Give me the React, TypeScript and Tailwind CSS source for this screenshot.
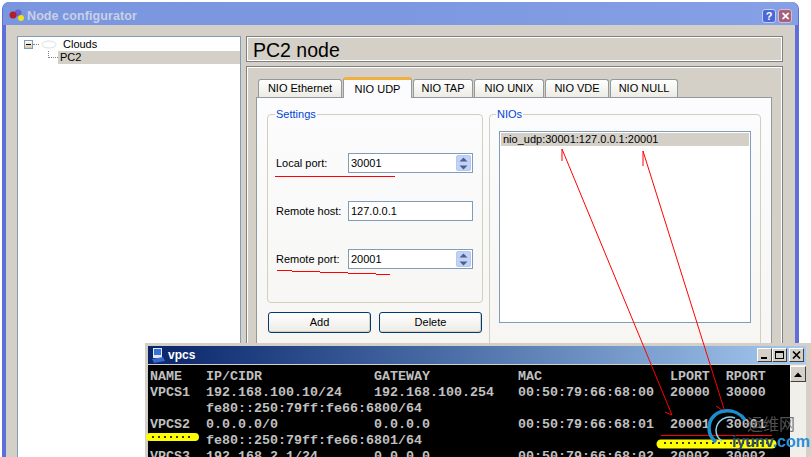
import React from "react";

const ui = "font-['Liberation_Sans',sans-serif]";

function Spin() {
  return (
    <div className="w-[15px] h-[16px] bg-[#c1d2f8] rounded-[2px] border border-[#b4c8f0] flex flex-col items-center justify-center gap-[3px]">
      <svg width="9" height="5"><path d="M0.5 4.5 L4.5 0.5 L8.5 4.5 Z" fill="#4d6185" /></svg>
      <svg width="9" height="5"><path d="M0.5 0.5 L4.5 4.5 L8.5 0.5 Z" fill="#4d6185" /></svg>
    </div>
  );
}

function Field({ label, value, spin, mt }: { label: string; value: string; spin?: boolean; mt: string }) {
  return (
    <div className={`flex items-center h-[20px] ${mt}`}>
      <div className="w-[72px] text-[11px] text-black whitespace-nowrap">{label}</div>
      <div className="w-[125px] h-[20px] border border-[#7f9db9] bg-white flex items-center justify-between pl-[2px] pr-[1px]">
        <span className="text-[11px] text-black pt-px">{value}</span>
        {spin && <Spin />}
      </div>
    </div>
  );
}

function Btn({ children }: { children: React.ReactNode }) {
  return (
    <div className="w-[103px] h-[21px] border border-[#003c74] rounded-[3px] bg-gradient-to-b from-white to-[#ecebe5] shadow-[inset_-1px_-1px_0_#d6d0c5] flex items-center justify-center text-[11px] text-black">
      {children}
    </div>
  );
}

function Tab({ label, w, active }: { label: string; w: string; active?: boolean }) {
  if (active) {
    return (
      <div className={`${w} h-[21px] -mb-px relative z-10 bg-[#fcfcfe] border-x border-[#919b9c] border-t-[3px] border-t-[#f0b040] rounded-t-[3px] flex items-center justify-center text-[11px] text-black`}>
        {label}
      </div>
    );
  }
  return (
    <div className={`${w} h-[18px] self-end bg-gradient-to-b from-white to-[#ecebe4] border-x border-t border-[#919b9c] rounded-t-[3px] flex items-center justify-center text-[11px] text-black`}>
      {label}
    </div>
  );
}

const row = (a: string, b = "", c = "", d = "", e = "", f = "") =>
  a.padEnd(7) + b.padEnd(21) + c.padEnd(18) + d.padEnd(19) + e.padEnd(7) + f;

const TERM = [
  row("NAME", "IP/CIDR", "GATEWAY", "MAC", "LPORT", "RPORT"),
  row("VPCS1", "192.168.100.10/24", "192.168.100.254", "00:50:79:66:68:00", "20000", "30000"),
  row("", "fe80::250:79ff:fe66:6800/64"),
  row("VPCS2", "0.0.0.0/0", "0.0.0.0", "00:50:79:66:68:01", "20001", "30001"),
  row("", "fe80::250:79ff:fe66:6801/64"),
  row("VPCS3", "192.168.2.1/24", "0.0.0.0", "00:50:79:66:68:02", "20002", "30002"),
];

function CapBtn({ children }: { children: React.ReactNode }) {
  return (
    <div className="w-[15px] h-[14px] bg-[#d4d0c8] border border-t-white border-l-white border-r-[#404040] border-b-[#404040] flex items-center justify-center">
      {children}
    </div>
  );
}

export default function App() {
  return (
    <div className={`relative w-[811px] h-[457px] overflow-hidden bg-white ${ui}`}>
      {/* Node configurator window */}
      <div className="ml-[2px] mt-[2px] w-[797px] h-[520px] rounded-t-[7px] bg-[#5f6ed8] px-[4px] pb-[4px] flex flex-col">
        <div className="h-[23px] -mx-[3px] rounded-t-[6px] bg-gradient-to-r from-[#7a96df] via-[#7c98e0] to-[#86a0e6] flex items-center pt-[5px] pl-[5px] pr-[6px] shrink-0">
          <svg width="20" height="16" viewBox="0 0 20 16">
            <circle cx="10" cy="5" r="3.5" fill="#6a62c8" />
            <circle cx="5" cy="7" r="3.5" fill="#b02028" />
            <circle cx="13" cy="10" r="3" fill="#f2e21a" />
          </svg>
          <span className="-ml-px text-[12.5px] font-bold text-[#c9d0e6] tracking-[0.1px]">Node configurator</span>
          <div className="ml-auto flex gap-[2px]">
            <div className="w-[14px] h-[14px] rounded-[3px] border border-[#c4d0f0] bg-[#4a68d8] flex items-center justify-center text-[11px] font-bold text-white">?</div>
            <div className="w-[14px] h-[14px] rounded-[3px] border border-[#d0c0d0] bg-[#a8607a] flex items-center justify-center text-[11px] font-bold text-white">✕</div>
          </div>
        </div>
        <div className="flex-1 bg-[#d4d0c8] pt-[11px] pl-[11px] pr-[12px] flex gap-[5px]">
          {/* Tree */}
          <div className="w-[224px] h-[440px] border border-[#7f9db9] bg-white pt-[1px]">
            <div className="h-[13px] flex items-center pl-[6px]">
              <div className="w-[9px] h-[9px] border border-[#7f9db9] bg-gradient-to-b from-white to-[#d8c8a8] flex items-center justify-center">
                <div className="w-[5px] h-px bg-black" />
              </div>
              <div className="w-[6px] border-t border-dotted border-[#808080]" />
              <svg width="17" height="9" viewBox="0 0 17 9" className="ml-[2px]">
                <ellipse cx="8" cy="4.5" rx="7" ry="3.5" fill="none" stroke="#d8e2e2" />
              </svg>
              <span className="ml-[5px] text-[11px] text-black">Clouds</span>
            </div>
            <div className="h-[13px] flex items-stretch pl-[30px]">
              <div className="w-[10px] h-[7px] border-l border-b border-dotted border-[#808080]" />
              <div className="flex-1 bg-[#d4d0c8] flex items-center pl-[2px] text-[11px] text-black">PC2</div>
            </div>
          </div>
          {/* Right side */}
          <div className="w-[537px]">
            <div className="h-[26px] border border-[#808080] shadow-[inset_0_0_0_1px_#fff] flex items-center pt-[3px] pl-[6px] text-[19.5px] text-black">PC2 node</div>
            <div className="mt-[4px] h-[400px] border border-[#808080] shadow-[inset_0_0_0_1px_#fff] pt-[9px] pl-[9px] pr-[10px]">
              <div className="flex pl-[2px] h-[21px] gap-[1px] items-end">
                <Tab label="NIO Ethernet" w="w-[84px]" />
                <Tab label="NIO UDP" w="w-[69px]" active />
                <Tab label="NIO TAP" w="w-[60px]" />
                <Tab label="NIO UNIX" w="w-[70px]" />
                <Tab label="NIO VDE" w="w-[64px]" />
                <Tab label="NIO NULL" w="w-[68px]" />
              </div>
              <div className="h-[360px] border border-[#919b9c] bg-gradient-to-b from-[#fcfcfe] to-[#f4f3ee] pt-[11px] pl-[10px] flex gap-[6px]">
                <div className="w-[216px]">
                  <fieldset className="h-[195px] border border-[#d0d0bf] rounded-[4px] pl-[8px] -mt-[1px]">
                    <legend className="px-px text-[11px] text-[#0046d5] leading-[13px] -ml-px">Settings</legend>
                    <Field label="Local port:" value="30001" spin mt="mt-[32px]" />
                    <Field label="Remote host:" value="127.0.0.1" mt="mt-[28px]" />
                    <Field label="Remote port:" value="20001" spin mt="mt-[28px]" />
                  </fieldset>
                  <div className="flex gap-[8px] mt-[9px] pl-px">
                    <Btn>Add</Btn>
                    <Btn>Delete</Btn>
                  </div>
                </div>
                <fieldset className="w-[272px] h-[300px] border border-[#d0d0bf] rounded-[4px] pl-[9px] -mt-[1px]">
                  <legend className="px-px text-[11px] text-[#0046d5] leading-[13px] -ml-[3px]">NIOs</legend>
                  <div className="w-[252px] h-[192px] mt-[10px] border border-[#7f9db9] bg-white p-px">
                    <div className="h-[13px] bg-[#d4d0c8] flex items-center pl-[2px] text-[11px] text-black">nio_udp:30001:127.0.0.1:20001</div>
                  </div>
                </fieldset>
              </div>
            </div>
          </div>
        </div>
      </div>

      {/* vpcs console window, over the dialog */}
      <div className="absolute left-[145px] top-[343px] w-[666px] h-[114px] bg-[#d4d0c8] pt-[3px] pl-[3px] pr-[5px] flex flex-col">
        <div className="h-[18px] shrink-0 bg-gradient-to-r from-[#0a246a] to-[#a6caf0] flex items-center pl-[2px] pr-[2px]">
          <svg width="16" height="17" viewBox="0 0 16 17">
            <rect x="3" y="1" width="9" height="10" fill="#dfe8f8" />
            <rect x="4" y="2" width="7" height="6" fill="#3a70d8" />
            <path d="M2 12 L13 10 L15 14 L4 16 Z" fill="#3a68c8" />
          </svg>
          <span className="ml-[2px] text-[12px] font-bold text-white">vpcs</span>
          <div className="ml-auto flex items-center">
            <CapBtn><div className="w-[6px] h-[2px] bg-black mt-[6px] -ml-[1px]" /></CapBtn>
            <CapBtn><div className="w-[9px] h-[8px] border border-black border-t-2" /></CapBtn>
            <div className="ml-[2px]">
              <CapBtn>
                <svg width="9" height="8" viewBox="0 0 9 8"><path d="M1 0.5 L8 7.5 M8 0.5 L1 7.5" stroke="#000" strokeWidth="1.6" /></svg>
              </CapBtn>
            </div>
          </div>
        </div>
        <div className="flex flex-1 mt-[1px] min-h-0">
          <pre className="flex-1 min-w-0 bg-black pt-[4px] pl-[2px] overflow-hidden font-['Liberation_Mono',monospace] font-bold text-[13.33px] leading-[16px] text-[#c0c0c0]">
            {TERM.join("\n")}
          </pre>
          <div className="w-[16px] shrink-0 bg-[#f1efe9] pt-[1px]">
            <div className="h-[16px] bg-[#d4d0c8] border border-t-white border-l-white border-r-[#404040] border-b-[#404040] flex items-center justify-center">
              <svg width="8" height="5"><path d="M0 5 L4 0.5 L8 5 Z" fill="#000" /></svg>
            </div>
          </div>
        </div>
      </div>

      {/* hand-drawn annotations and watermark, over everything */}
      <svg className="absolute left-0 top-0" width="811" height="457" viewBox="0 0 811 457">
        <g fill="none" stroke="#ff0000" strokeWidth="1">
          <path d="M275 176.5 H395" />
          <path d="M277 270.5 H292 M292 271.5 H320 M320 272.5 H348 M348 273.5 H376 M376 274.5 H390" />
          <path d="M562 149 L672 415 M562 149 V161 M672 415 L665 412" />
          <path d="M643 151 L725 412 M643 151 V166 M725 412 L716 406" />
          <path d="M661 435.5 H772" />
        </g>
        <g stroke="#ffff00" strokeLinecap="round" fill="none">
          <path d="M150 437 H195" strokeWidth="8" />
          <path d="M661 444 H772" strokeWidth="9" />
        </g>
        <g fill="none" stroke="#403c10" strokeWidth="2" strokeDasharray="2 4">
          <path d="M152 437 H194" />
          <path d="M664 443 H770" />
        </g>
        <g fill="none">
          <path d="M745 420 A21 20 0 0 0 725 411 A17 17 0 0 0 709 428 A18 18 0 0 0 716 442" stroke="#1a8fd0" strokeWidth="3.5" />
          <path d="M735 418 A14 14 0 0 0 716 430 A13 13 0 0 0 722 441" stroke="#8fd0ee" strokeWidth="1.5" />
        </g>
        <text x="747" y="430" fontSize="16" fill="#606060" fillOpacity="0.85" fontFamily="'Noto Sans CJK SC', sans-serif">运维网</text>
        <text x="732" y="447" fontSize="16" fontWeight="700" fill="#2a8fd8" fontFamily="'Liberation Sans', sans-serif">
          <tspan fill="#2c4a70">iyunv</tspan>.com
        </text>
      </svg>
    </div>
  );
}
